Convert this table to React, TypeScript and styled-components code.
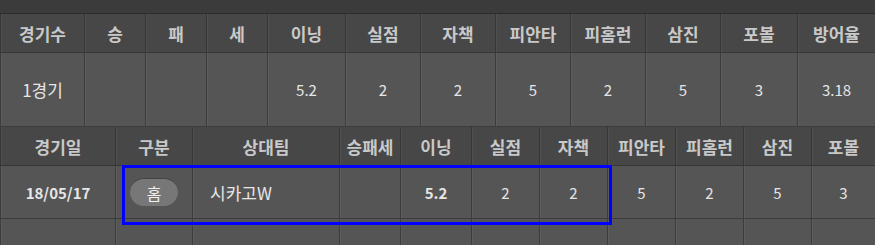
import React from "react";
import styled, { createGlobalStyle } from "styled-components";

const GlobalStyle = createGlobalStyle`
  body {
    margin: 0;
    background: #3a3a3a;
    font-family: "Noto Sans CJK KR", "Noto Sans", sans-serif;
    overflow: hidden;
  }
`;

const SCPage = styled.div`
  width: 875px;
  height: 245px;
  overflow: hidden;
  background: #3a3a3a;
`;

const SCTopStrip = styled.div`
  height: 13px;
  background: #3b3b3b;
  border-bottom: 1px solid #2c2c2c;
`;

const SCTable = styled.table`
  width: 875px;
  table-layout: fixed;
  border-collapse: collapse;
`;

const SCHeadCell = styled.th`
  height: 38px;
  padding: 0;
  background: #474747;
  color: #c9c9c9;
  font-size: 17px;
  font-weight: 700;
  text-align: center;
  border: 1px solid #363636;
  border-top: none;
  box-shadow: inset 1px 0 0 #505050;
  white-space: nowrap;
  overflow: hidden;
`;

const SCCell = styled.td<{ $h: number; $bold?: boolean; $left?: boolean; $kr?: boolean }>`
  height: ${(p) => p.$h}px;
  padding: ${(p) => (p.$left ? "0 0 0 17px" : "0")};
  background: #555555;
  color: #e6e6e6;
  font-size: ${(p) => (p.$kr ? 17 : 15)}px;
  font-weight: ${(p) => (p.$bold ? 700 : 400)};
  text-align: ${(p) => (p.$left ? "left" : "center")};
  border: 1px solid #3c3c3c;
  box-shadow: inset 1px 0 0 #5d5d5d;
  white-space: nowrap;
`;

const SCSecond = styled.div`
  position: relative;
`;

const SCHighlight = styled.div`
  position: absolute;
  left: 122px;
  top: 38px;
  width: 484px;
  height: 54px;
  border: 3px solid #0000ff;
  pointer-events: none;
`;

const SCPill = styled.span`
  display: inline-flex;
  align-items: center;
  justify-content: center;
  width: 48px;
  height: 28px;
  border-radius: 14px;
  background: #777777;
  border-top: 1px solid #454545;
  box-sizing: border-box;
  color: #f0f0f0;
  font-size: 16px;
`;

const summaryCols = [84, 61, 61, 61, 78, 75, 75, 75, 75, 75, 77, 78];
const summaryHead = ["경기수", "승", "패", "세", "이닝", "실점", "자책", "피안타", "피홈런", "삼진", "포볼", "방어율"];
const summaryData = ["1경기", "", "", "", "5.2", "2", "2", "5", "2", "5", "3", "3.18"];

const gameCols = [115, 77, 147, 61, 71, 68, 68, 68, 68, 68, 64];
const gameHead = ["경기일", "구분", "상대팀", "승패세", "이닝", "실점", "자책", "피안타", "피홈런", "삼진", "포볼"];

export default function App() {
  return (
    <SCPage>
      <GlobalStyle />
      <SCTopStrip />
      <SCTable>
        <colgroup>
          {summaryCols.map((w, i) => (
            <col key={i} style={{ width: w }} />
          ))}
        </colgroup>
        <thead>
          <tr>
            {summaryHead.map((h) => (
              <SCHeadCell key={h}>{h}</SCHeadCell>
            ))}
          </tr>
        </thead>
        <tbody>
          <tr>
            {summaryData.map((d, i) => (
              <SCCell key={i} $h={73} $kr={i === 0}>
                {d}
              </SCCell>
            ))}
          </tr>
        </tbody>
      </SCTable>
      <SCSecond>
        <SCTable>
          <colgroup>
            {gameCols.map((w, i) => (
              <col key={i} style={{ width: w }} />
            ))}
          </colgroup>
          <thead>
            <tr>
              {gameHead.map((h) => (
                <SCHeadCell key={h}>{h}</SCHeadCell>
              ))}
            </tr>
          </thead>
          <tbody>
            <tr>
              <SCCell $h={52} $bold>
                18/05/17
              </SCCell>
              <SCCell $h={52}>
                <SCPill>홈</SCPill>
              </SCCell>
              <SCCell $h={52} $left $kr>
                시카고W
              </SCCell>
              <SCCell $h={52} />
              <SCCell $h={52} $bold>
                5.2
              </SCCell>
              <SCCell $h={52}>2</SCCell>
              <SCCell $h={52}>2</SCCell>
              <SCCell $h={52}>5</SCCell>
              <SCCell $h={52}>2</SCCell>
              <SCCell $h={52}>5</SCCell>
              <SCCell $h={52}>3</SCCell>
            </tr>
            <tr>
              {gameCols.map((_, i) => (
                <SCCell key={i} $h={52} />
              ))}
            </tr>
          </tbody>
        </SCTable>
        <SCHighlight />
      </SCSecond>
    </SCPage>
  );
}
